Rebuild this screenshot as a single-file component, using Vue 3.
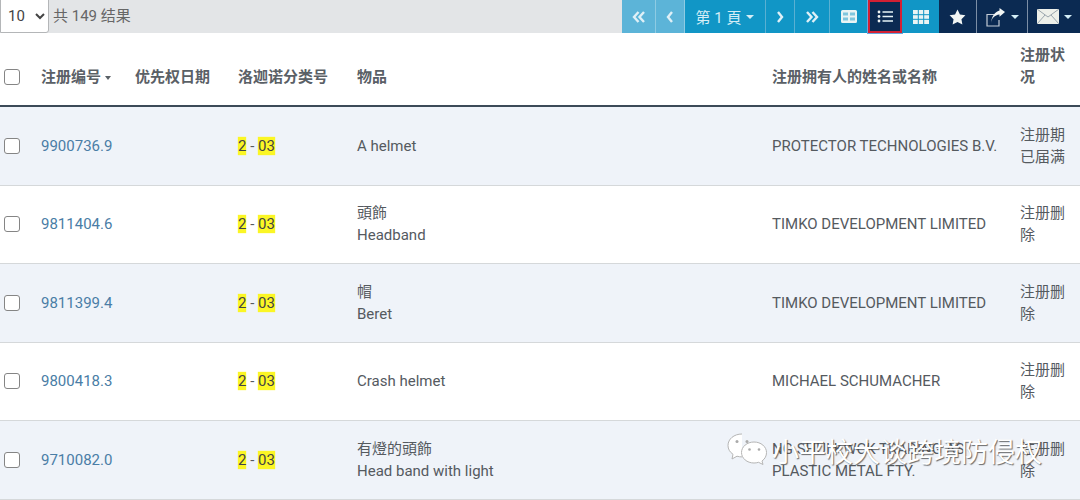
<template>
  <div class="page">
    <div class="toolbar">
      <select class="size-select">
        <option>10</option>
      </select>
      <span class="total">共 149 结果</span>
      <div class="actions">
        <button class="tool light first">
          <svg width="14" height="12" viewBox="0 0 14 12"><path d="M6.500 1 2 6l4.500 5M12 1 7.500 6l4.500 5" /></svg>
        </button>
        <button class="tool light prev">
          <svg width="8" height="12" viewBox="0 0 8 12"><path d="M6 1 2 6l4 5" /></svg>
        </button>
        <button class="tool page-pick">第 1 頁<i class="caret"></i></button>
        <button class="tool next">
          <svg width="8" height="12" viewBox="0 0 8 12"><path d="m2 1 4 5-4 5" /></svg>
        </button>
        <button class="tool last">
          <svg width="14" height="12" viewBox="0 0 14 12"><path d="m2 1 4.500 5L2 11M7.500 1 12 6l-4.500 5" /></svg>
        </button>
        <button class="tool view cards">
          <svg width="16" height="13" viewBox="0 0 16 13"><path d="M1.500 0h13A1.500 1.500 0 0 1 16 1.500v10a1.500 1.500 0 0 1-1.500 1.500h-13A1.500 1.500 0 0 1 0 11.500v-10A1.500 1.500 0 0 1 1.500 0z" class="solid" /><path d="M2 2.500h5v3H2zM9 2.500h5v3H9zM2 7.500h5v3H2zM9 7.500h5v3H9z" class="hole" /></svg>
        </button>
        <button class="tool view current">
          <svg width="17" height="13" viewBox="0 0 17 13">
            <circle cx="2" cy="2" r="1.400" class="dot" /><circle cx="2" cy="6.500" r="1.400" class="dot" /><circle cx="2" cy="11" r="1.400" class="dot" />
            <path d="M5.500 2H16M5.500 6.500H16M5.500 11H16" class="thin" />
          </svg>
        </button>
        <button class="tool view table">
          <svg width="16" height="14" viewBox="0 0 16 14"><path d="M0 0h16v14H0z" class="solid" /><path d="M0 4.700h16M0 9.300h16M5.300 0v14M10.700 0v14" class="gap" /></svg>
        </button>
        <button class="tool dark star">
          <svg width="17" height="16" viewBox="0 0 18 17"><path d="m9 .6 2.600 5.300 5.800.8-4.200 4.100 1 5.800L9 13.900l-5.200 2.700 1-5.800L.6 6.700l5.800-.8z" class="solid" /></svg>
        </button>
        <button class="tool dark share">
          <svg width="20" height="20" viewBox="0 0 20 20"><path d="M11 7.500H1V19h12v-6" class="box" /><path d="M5 16c.6-5 3.500-8 8.500-8.600v2.400L19 5 13.500 1v2.600C8.500 5 5.500 10 5 16z" class="solid" /></svg>
          <i class="caret"></i>
        </button>
        <button class="tool dark mail">
          <svg width="22" height="15" viewBox="0 0 22 15"><path d="M0 0h22v15H0z" class="mail-body" /><path d="m0 0 11 8 11-8M0 15l8-9M22 15l-8-9" class="mail-line" /></svg>
          <i class="caret"></i>
        </button>
      </div>
    </div>

    <div class="grid-row head">
      <span class="cell"><input type="checkbox" class="check" /></span>
      <span class="cell">注册编号<i class="caret sort"></i></span>
      <span class="cell">优先权日期</span>
      <span class="cell">洛迦诺分类号</span>
      <span class="cell">物品</span>
      <span class="cell">注册拥有人的姓名或名称</span>
      <span class="cell status">注册状况</span>
    </div>

    <div v-for="row in rows" :key="row.no" class="grid-row item">
      <span class="cell"><input type="checkbox" class="check" /></span>
      <span class="cell"><a class="num">{{ row.no }}</a></span>
      <span class="cell"></span>
      <span class="cell"><mark>2</mark> - <mark>03</mark></span>
      <span class="cell lines">
        <span v-for="line in row.goods" :key="line">{{ line }}</span>
      </span>
      <span class="cell lines">
        <span v-for="line in row.owner" :key="line">{{ line }}</span>
      </span>
      <span class="cell status">{{ row.status }}</span>
    </div>

    <div class="watermark">
      <svg width="40" height="32" viewBox="0 0 40 32">
        <path d="M15 1C7 1 1 6 1 12.500c0 3.500 1.700 6.500 5 8.800L5 26l5-2.800c1.800.5 3.200.7 5 .7" class="wm-line" />
        <path d="M27 9c-7 0-12.500 4.700-12.500 10.500S20 30 27 30c1.700 0 2.800-.2 4.500-.7L36 31.500 35 28c3-2.200 4.500-5 4.500-8.500C39.500 13.700 34 9 27 9z" class="wm-line" />
        <circle cx="10" cy="8.500" r="1.500" class="wm-dot" /><circle cx="20" cy="8.500" r="1.500" class="wm-dot" />
        <circle cx="22.500" cy="16.500" r="1.300" class="wm-dot" /><circle cx="32" cy="16.500" r="1.300" class="wm-dot" />
      </svg>
      <span class="wm-text">小平校大谈跨境防侵权</span>
    </div>
  </div>
</template>

<script setup>
const rows = [
  { no: '9900736.9', goods: ['A helmet'], owner: ['PROTECTOR TECHNOLOGIES B.V.'], status: '注册期已届满' },
  { no: '9811404.6', goods: ['頭飾', 'Headband'], owner: ['TIMKO DEVELOPMENT LIMITED'], status: '注册删除' },
  { no: '9811399.4', goods: ['帽', 'Beret'], owner: ['TIMKO DEVELOPMENT LIMITED'], status: '注册删除' },
  { no: '9800418.3', goods: ['Crash helmet'], owner: ['MICHAEL SCHUMACHER'], status: '注册删除' },
  { no: '9710082.0', goods: ['有燈的頭飾', 'Head band with light'], owner: ['NG SHUI KWCK TRADING AS', 'PLASTIC METAL FTY.'], status: '注册删除' },
]
</script>

<style>
html, body {
  background: #fff;
  overflow: hidden;
}
</style>

<style scoped>
.page {
  position: relative;
  width: 1080px;
  height: 500px;
  overflow: hidden;
  font-family: Roboto, "Noto Sans CJK SC", sans-serif;
  font-size: 15px;
  line-height: 22px;
  color: #555a5f;
}

.toolbar {
  display: flex;
  align-items: center;
  height: 33px;
  background: #e3e5e7;
}

.size-select {
  width: 49px;
  height: 34px;
  margin-top: -1px;
  padding: 0 0 0 3px;
  border: 1px solid #b4b6b8;
  border-radius: 0 0 3px 0;
  background: #fff;
  font: 15px Roboto, sans-serif;
  color: #444;
}

.total {
  margin: -2px 0 0 4px;
  color: #666;
}

.actions {
  display: flex;
  height: 33px;
  margin-left: auto;
}

.tool {
  display: flex;
  align-items: center;
  justify-content: center;
  height: 33px;
  padding: 0;
  border: 0;
  border-right: 1px solid #5ab0d2;
  background: #1196c6;
  color: #d4edf6;
  font: 15px Roboto, "Noto Sans CJK SC", sans-serif;
}

.tool svg path {
  fill: none;
  stroke: #dff0f7;
  stroke-width: 2.400;
}

.light {
  background: #5cb4d8;
  border-right-color: #8ecbe3;
}

.first { width: 34px; }
.prev { width: 29px; }
.page-pick { width: 81px; }
.next { width: 29px; }
.last { width: 35px; }
.cards { width: 38px; }
.table { width: 37px; }

.view {
  border-right: 0;
}

.current {
  width: 34px;
  height: 33px;
  border: 2px solid #d32033;
  background: #0b2a52;
  box-shadow: 0 0 0 1px #6aa6dc;
}

.dark {
  border-right: 1px solid #7c8ea5;
  background: #0b2a52;
}

.star { width: 38px; }
.share { width: 51px; }

.mail {
  width: 52px;
  border-right: 0;
}

.tool svg .solid {
  fill: #e9f4f4;
  stroke: none;
}

.star svg .solid,
.share svg .solid {
  fill: #f1f5f4;
}

.tool svg .box {
  stroke: #c3ccd6;
  stroke-width: 1.200;
}

.tool svg .hole {
  fill: #7fc6dd;
  stroke: none;
}

.tool svg .gap {
  stroke: #1196c6;
  stroke-width: 1;
}

.tool svg .thin {
  stroke: #e6f3f6;
  stroke-width: 1.500;
}

.tool svg .dot {
  fill: #f1f5f4;
}

.tool svg .mail-body {
  fill: #eef0ea;
  stroke: none;
}

.tool svg .mail-line {
  stroke: #9aa5ad;
  stroke-width: 1;
}

.caret {
  display: inline-block;
  width: 0;
  height: 0;
  margin-left: 5px;
  border-top: 4px solid currentColor;
  border-right: 4px solid transparent;
  border-left: 4px solid transparent;
}

.grid-row {
  display: grid;
  grid-template-columns: 41px 94px 103px 119px 415px 248px 60px;
  align-items: center;
}

.head {
  box-sizing: border-box;
  height: 74px;
  padding-bottom: 17px;
  border-bottom: 2px solid #3c4a58;
  align-items: end;
  font-weight: 700;
  color: #5a6066;
}

.head .check {
  margin-bottom: 3px;
}

.item {
  height: 77.500px;
  border-bottom: 1px solid #d5d8da;
}

.item:nth-of-type(odd) {
  background: #eff3f9;
}

.cell {
  display: block;
}

.status {
  width: 46px;
}

.lines {
  display: flex;
  flex-direction: column;
}

.check {
  display: block;
  width: 16px;
  height: 16px;
  margin: 0 0 0 4px;
  appearance: none;
  border: 1.500px solid #858585;
  border-radius: 3px;
  background: #fff;
}

.sort {
  margin-left: 4px;
  border-top-width: 4px;
  border-right-width: 3.500px;
  border-left-width: 3.500px;
  vertical-align: middle;
}

.num {
  color: #4a7da6;
}

mark {
  background: #fbf625;
  color: #444;
  box-shadow: 0 0 1px #fbf625;
}

.watermark {
  position: absolute;
  top: 433px;
  left: 727px;
  display: flex;
  gap: 5px;
  white-space: nowrap;
}

.wm-text {
  margin-top: 3px;
  font-size: 27px;
  line-height: 34px;
  color: #fff;
  text-shadow: 1px 1px 1px rgba(60, 60, 60, 0.75);
}

.wm-line {
  fill: #fff;
  stroke: #b5b5b5;
  stroke-width: 1;
}

.wm-dot {
  fill: #aaa;
}
</style>
